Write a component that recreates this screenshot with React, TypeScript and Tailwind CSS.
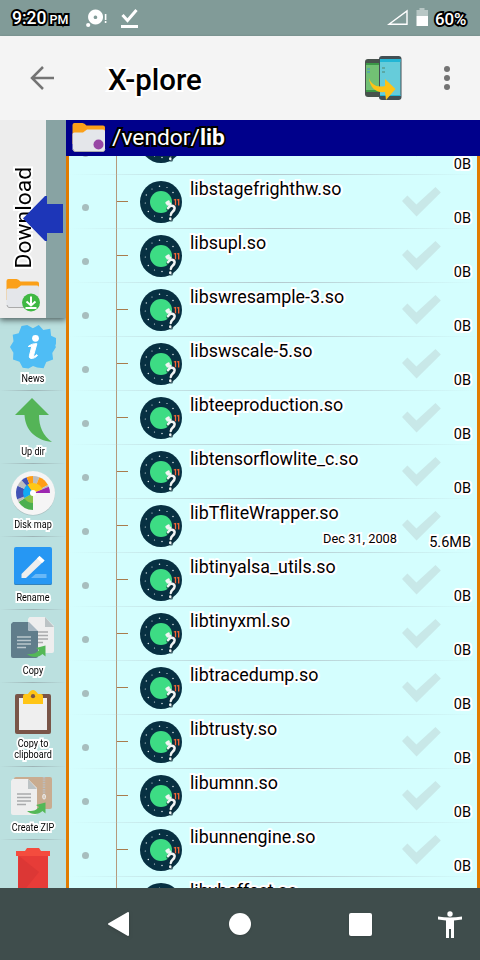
import React from "react";

const LIGHT = "[-webkit-text-stroke:4px_white] [paint-order:stroke_fill] text-black [stroke-linejoin:round]";
const DARK = "[-webkit-text-stroke:4px_black] [paint-order:stroke_fill] text-white [stroke-linejoin:round]";

type FileRow = { name: string; size: string; date?: string; raised?: boolean };

const files: FileRow[] = [
  { name: "", size: "0B", raised: true },
  { name: "libstagefrighthw.so", size: "0B" },
  { name: "libsupl.so", size: "0B" },
  { name: "libswresample-3.so", size: "0B" },
  { name: "libswscale-5.so", size: "0B" },
  { name: "libteeproduction.so", size: "0B" },
  { name: "libtensorflowlite_c.so", size: "0B" },
  { name: "libTfliteWrapper.so", size: "5.6MB", date: "Dec 31, 2008" },
  { name: "libtinyalsa_utils.so", size: "0B" },
  { name: "libtinyxml.so", size: "0B" },
  { name: "libtracedump.so", size: "0B" },
  { name: "libtrusty.so", size: "0B" },
  { name: "libumnn.so", size: "0B" },
  { name: "libunnengine.so", size: "0B" },
  { name: "libvbeffect.so", size: "0B" },
];

function FileIcon() {
  return (
    <svg className="h-[42px] w-[42px] shrink-0" viewBox="0 0 42 42">
      <circle cx="21" cy="21" r="21" fill="#073042" />
      <g fill="#dfe9ec">
        <circle cx="19.5" cy="5.3" r=".75" /><circle cx="27" cy="6.5" r=".6" />
        <circle cx="12" cy="8" r=".6" /><circle cx="33" cy="11.5" r=".75" />
        <circle cx="6.3" cy="14" r=".65" /><circle cx="5.3" cy="22" r=".6" />
        <circle cx="8.3" cy="30.5" r=".75" /><circle cx="14.5" cy="35" r=".6" />
        <circle cx="22" cy="36.5" r=".75" />
      </g>
      <circle cx="21" cy="21" r="11" fill="#3ddc84" />
      <path d="M33.8 19l1.7-.5v6M37 19l1.7-.5v6" fill="none" stroke="#f86734" strokeWidth="1.3" />
      <g fill="none" strokeLinecap="round" strokeLinejoin="round">
        <path d="M28.500 28q1.500-3 4-2.500c3.500 1 2.500 3.800.5 5.500q-1.500 1.500-1.700 3.200M31 38.300v.3" stroke="#0a2733" strokeOpacity=".65" strokeWidth="4.500" />
        <path d="M26.600 21.800l2-1.200M27.500 23.200l2.800-.5M28 27.200q1.600-3 4.200-2.400c3.600 1 2.600 4 .6 5.700q-1.800 1.500-2 3.500M30.300 37.600v.3" stroke="#f1f4f4" strokeWidth="2.500" />
      </g>
    </svg>
  );
}

function Row({ file }: { file: FileRow }) {
  return (
    <div className="flex h-[54px] w-[408px] shrink-0 flex-col">
      <div className="flex h-[53px]">
        <div className="flex w-[47px] shrink-0 justify-center pt-[29px] pr-[14px]">
          <span className="h-[7px] w-[7px] rounded-full bg-[#a7bebe]" />
        </div>
        <div className="-mb-px flex w-6 shrink-0 items-start border-l border-[#b59a7d] pt-[26px]">
          <span className="h-px w-[11px] bg-[#a97b4c]" />
        </div>
        <div className={file.raised ? "" : "pt-[6px]"}><FileIcon /></div>
        <div className="flex min-w-0 grow flex-col pl-2">
          <span className={`mt-1 h-5 whitespace-nowrap text-[17.85px] leading-5 ${LIGHT}`}>{file.name}</span>
          {file.date && <span className={`mt-[8px] self-end pr-[5px] text-[12.8px] leading-4 ${LIGHT}`}>{file.date}</span>}
        </div>
        <div className="flex w-[75px] shrink-0 flex-col">
          <svg className={`h-[30px] w-10 shrink-0 ${file.raised ? "mt-[6px] mb-[6px]" : "mt-3"}`} viewBox="0 0 40 30">
            <path d="M0 14l5.4-5.4 9 9L33.5 0l5.3 5.5L14.5 29.5z" fill="#c8e8e8" />
          </svg>
          <span className={`-mt-[7px] self-end pr-[6px] text-[14.5px] leading-[18px] ${LIGHT}`}>{file.size}</span>
        </div>
      </div>
      <div className="h-px bg-linear-to-r from-transparent via-[#b3c8cd] to-transparent" />
    </div>
  );
}

const NewsIcon = () => (
  <svg className="h-[46px] w-[46px]" viewBox="0 0 46 46">
    <path d="M17.2 1l5.7 3.2L28.8 1l4.5 5 7-1.2.8 7 6.2 2.8-2 7.4L46 23l-3.7 6 .8 6.5-6.8 2.5-2.7 6.2-6.5-.6L23 42l-4.500 2.500-5.800-.8-3.200-6L3 35.500l.4-6.800L0 23l3.500-5.800-.8-6.500 6-1.500L11.500 2z" fill="#4fbdf5" />
    <circle cx="25.5" cy="14.3" r="3.4" fill="#fff" />
    <path d="M18.2 22.5c3-2.3 5.5-3 8.7-2.8l-3.5 12.4c.8.6 2.2-.4 3.4-1.5l.7 1c-3 3.2-9 4.4-8.1.2l2.4-9.5z" fill="#fff" stroke="#fff" strokeWidth="1" />
  </svg>
);
const UpIcon = () => (
  <svg className="h-[46px] w-[46px]" viewBox="0 0 46 46">
    <path d="M22 1l17 17H29c0 12 4 20.500 13 27C26 43 15.500 34 14.500 18H5z" fill="#54b457" />
  </svg>
);

const outerRing: [number, number, string][] = [
  [0, 22, "#bdbdbd"], [22, 62, "#ff9d16"], [62, 68, "#bdbdbd"], [68, 90, "#9c27b0"],
  [180, 238, "#4caf50"], [238, 248, "#bdbdbd"], [248, 295, "#4252b5"],
  [295, 318, "#bdbdbd"], [318, 338, "#4252b5"], [338, 360, "#ff9d16"],
];
const innerRing: [number, number, string][] = [
  [-35, 68, "#ffc817"], [76, 90, "#9c27b0"], [180, 240, "#8bc34a"], [240, 325, "#13a9f4"],
];
function wedge(r: number, from: number, to: number) {
  const at = (deg: number) => {
    const a = (deg * Math.PI) / 180;
    return `${(23 + r * Math.sin(a)).toFixed(2)} ${(23 - r * Math.cos(a)).toFixed(2)}`;
  };
  return `M23 23L${at(from)}A${r} ${r} 0 0 1 ${at(to)}z`;
}
const DiskIcon = () => (
  <svg className="h-[46px] w-[46px]" viewBox="0 0 46 46">
    <circle cx="23" cy="23.600" r="22" fill="#a9bfc0" />
    <circle cx="23" cy="23" r="22" fill="#f5f5f5" />
    {outerRing.map(([a, b, c]) => <path key={a} d={wedge(17, a, b)} fill={c} />)}
    {innerRing.map(([a, b, c]) => <path key={a} d={wedge(10, a, b)} fill={c} />)}
    <circle cx="23" cy="23" r="3" fill="#fff" />
  </svg>
);
const RenameIcon = () => (
  <svg className="h-[46px] w-[46px]" viewBox="0 0 46 46">
    <rect x="4" y="4" width="38" height="38" rx="2" fill="#2697f3" />
    <path d="M4 40q0 2 2 2h34q2 0 2-2v-1q0 2-2 2H6q-2 0-2-2z" fill="#3482b9" />
    <path d="M25.500 31h11v4H21z" fill="#69b8f7" />
    <path d="M11.500 31L29.500 13l5 4.500L16 35h-4.500z" fill="#eee" />
    <path d="M27 15.500l2.500-2.500 5 4.500-2.500 2.500z" fill="#fff" />
  </svg>
);
function Page({ x, y }: { x: number; y: number }) {
  return (
    <g transform={`translate(${x} ${y})`}>
      <path d="M1.500 0H17l9 9v25q0 2-2 2H2q-2 0-2-2V2z" fill="#eee" />
      <path d="M17 0l9 10h-9z" fill="#bcc3c5" />
      <path d="M6 15h14M6 18.500h14M6 22h14M6 25.500h9" stroke="#a9aaac" strokeWidth="1.300" />
    </g>
  );
}
const CopyIcon = () => (
  <svg className="h-[46px] w-[46px]" viewBox="0 0 46 46">
    <Page x={18} y={1} />
    <path d="M3 6h15v7q0 2 2 2h8v25q0 2-2 2H3q-2 0-2-2V8z" fill="#607d8b" />
    <path d="M18 6v7q0 2 2 2h8L19 6z" fill="#a9b9c3" />
    <path d="M7 21h14M7 24.500h14M7 28h14M7 31.500h9" stroke="#b9c7cd" strokeWidth="1.300" />
    <path d="M17 38c7 .5 10-1.500 12-4l-3-2 9.500-2.500v11l-3-2.500c-4 4-11 4-15.500 0z" fill="#54b857" />
  </svg>
);
const ClipIcon = () => (
  <svg className="h-[46px] w-[46px]" viewBox="0 0 46 46">
    <rect x="5" y="5" width="36" height="40" rx="2" fill="#795548" />
    <rect x="9" y="9" width="28" height="32" fill="#efefef" />
    <path d="M13 15V7q0-2 2-2h3q5-8 10 0h3q2 0 2 2v8z" fill="#ffc516" />
    <circle cx="23" cy="7.200" r="2.100" fill="#795548" />
  </svg>
);
const ZipIcon = () => (
  <svg className="h-[46px] w-[46px]" viewBox="0 0 46 46">
    <rect x="4" y="4" width="38" height="32" rx="2" fill="#c9ac90" />
    <path d="M34 4v18" stroke="#bdbdbd" strokeWidth="2.500" strokeDasharray="1.400 1" />
    <rect x="32.800" y="21.500" width="2.600" height="4.500" rx="1.300" fill="#d8c6b5" stroke="#eee" strokeWidth="1" />
    <Page x={1} y={6} />
    <path d="M17 38c7 .5 10-1.500 12-4l-3-2 9.500-2.500v11l-3-2.500c-4 4-11 4-15.500 0z" fill="#54b857" />
  </svg>
);
const TrashIcon = () => (
  <svg className="h-[46px] w-[46px]" viewBox="0 0 46 46">
    <path d="M8 8h30v38H8z" fill="#e73c38" />
    <path d="M9 10l20 16-16 20H8z" fill="#d63434" fillOpacity=".6" />
    <path d="M15 5l2-3h12l2 3h9v5H6V5z" fill="#f44c3e" />
  </svg>
);

function Tool({ label, icon, tall = false }: { label: string; icon: React.ReactNode; tall?: boolean }) {
  return (
    <div className={`flex w-full shrink-0 flex-col items-center ${tall ? "h-[84px]" : "h-[73px]"}`}>
      <div className="mt-[6px] h-[46px]">{icon}</div>
      <div className="mt-[3px] w-[70px] grow scale-x-[0.88] text-center text-[10.300px] leading-[11px] whitespace-pre-line text-black [-webkit-text-stroke:4px_white] [paint-order:stroke_fill]">{label}</div>
      <div className="h-px w-full bg-linear-to-r from-transparent via-[#9db3b5] to-transparent" />
    </div>
  );
}

function Folder({ badge }: { badge: React.ReactNode }) {
  return (
    <svg className="h-9 w-9 shrink-0 overflow-visible" viewBox="0 0 36 36">
      <path d="M1.500 24V5q0-2 2-2h8q2 0 4 2.500h16.500q2 0 2 2v16z" fill="#fba019" />
      <path d="M1.500 28V14q0-1.500 2-1.500h8.500l4-3h16q2 0 2 2v18q0 2-2 2h-28q-2.500 0-2.500-3z" fill="#e4e6ea" />
      <path d="M2 29q.5 2.500 2 2.500h28q1.500 0 2-2" fill="none" stroke="#aaa" />
      {badge}
    </svg>
  );
}

export default function App() {
  return (
    <div className="flex h-[960px] w-[480px] flex-col overflow-hidden font-['Roboto',sans-serif]">
      <div className="flex h-9 shrink-0 items-center bg-[#819b98] pl-3">
        <span className={`w-[74px] pt-[2px] text-[17.500px] leading-6 font-medium ${DARK}`}>9:20<span className="ml-[3px] text-[12.500px]">PM</span></span>
        <svg className="h-6 w-6" viewBox="0 0 24 24" fill="#fff">
          <path fillRule="evenodd" d="M9.500 3.500a7.500 7.500 0 1 0 .1 0zM9.500 9.500a1.800 1.800 0 1 1-.1 0z" />
          <circle cx="2.200" cy="19" r="2.100" />
          <path d="M18.800 8h1.600v6h-1.600zM18.800 15h1.600v2h-1.600z" />
        </svg>
        <svg className="ml-[11px] h-6 w-6" viewBox="0 0 24 24">
          <path d="M1.500 9l5 5.500L15.500 4" fill="none" stroke="#fff" strokeWidth="3" />
          <path d="M0 19h17v3H0z" fill="#fff" />
        </svg>
        <svg className="ml-auto h-9 w-[42px]" viewBox="0 0 42 36">
          <path d="M2 24.300L20 11v13.300z" fill="none" stroke="#fff" strokeWidth="1.400" />
          <path d="M29.500 10h3V8h5v2h3.500v6H29.500z" fill="#b8c7c5" />
          <path d="M29.500 16H41v10H29.500z" fill="#fff" />
        </svg>
        <span className={`ml-[6px] w-[45px] pt-[2px] text-[16.800px] leading-6 font-medium ${DARK}`}>60%</span>
      </div>

      <div className="flex h-[84px] shrink-0 items-center bg-[#f4f4f4] shadow-[0_1px_3px_#0004]">
        <svg className="ml-[30px] h-6 w-6" viewBox="0 0 24 24" fill="none" stroke="#747474" strokeWidth="2.500">
          <path d="M13 1L2 12l11 11M1.800 12H24" />
        </svg>
        <span className={`ml-[54px] pt-[3px] text-[29.400px] leading-9 font-medium ${LIGHT}`}>X-plore</span>
        <svg className="ml-auto h-12 w-[37px]" viewBox="0 0 37 48">
          <rect x="0" y="5" width="17" height="38" rx="3" fill="#47524c" />
          <path d="M1 9h16v28H1z" fill="#72c174" />
          <path d="M1 9h13v2H1zM1 36h14v2H1z" fill="#3b9746" />
          <rect x="14" y="2" width="22.500" height="44" rx="3" fill="#424f54" />
          <path d="M15 5h20.500v37H15z" fill="#66ccda" />
          <path d="M15 5h20.500v3H15zM15 41h20.500v1H15z" fill="#22b6d5" />
          <path d="M2 15h3M2 18h3M17 14h3M17 18h3" stroke="#5ba9a5" strokeWidth="2" />
          <path d="M4 24c2 6 7 10 16 8v-7l10.500 10L21 46l-1-8C11 39 5 34 4 24z" fill="#ffc216" />
        </svg>
        <svg className="mr-[21px] ml-[33px] h-[26px] w-6" viewBox="0 0 24 26" fill="#737373">
          <circle cx="12" cy="4" r="3" /><circle cx="12" cy="13" r="3" /><circle cx="12" cy="22" r="3" />
        </svg>
      </div>

      <div className="flex h-[768px] min-h-0 shrink-0">
        <aside className="flex w-[66px] shrink-0 flex-col overflow-hidden bg-[#bbe0df]">
          <div className="relative flex h-[198px] shrink-0 bg-[#88a3a3] shadow-[0_2px_6px_#0009]">
            <div className="flex w-[46px] flex-col items-center bg-[#ededed]">
              <div className="flex h-[156px] items-end pl-[2px]">
                <span className={`mb-2 rotate-180 text-[22.800px] leading-6 [writing-mode:vertical-rl] ${LIGHT}`}>Download</span>
              </div>
              <Folder badge={<><circle cx="26" cy="26.500" r="9" fill="#3fb843" /><path d="M26 20.500v9M21.500 25.500l4.500 4 4.500-4M20.500 32h11" fill="none" stroke="#fff" strokeWidth="2" /></>} />
            </div>
            <svg className="absolute top-[76px] left-[23px] h-[45px] w-10" viewBox="0 0 40 45">
              <path d="M0 22.500L22 0h2v8h16v29H24v8h-2z" fill="#1d36b8" />
            </svg>
          </div>
          <Tool label="News" icon={<NewsIcon />} />
          <Tool label="Up dir" icon={<UpIcon />} />
          <Tool label="Disk map" icon={<DiskIcon />} />
          <Tool label="Rename" icon={<RenameIcon />} />
          <Tool label="Copy" icon={<CopyIcon />} />
          <Tool label={"Copy to\nclipboard"} icon={<ClipIcon />} tall />
          <Tool label="Create ZIP" icon={<ZipIcon />} />
          <Tool label="" icon={<TrashIcon />} />
        </aside>

        <main className="flex w-[414px] flex-col">
          <div className="flex h-9 shrink-0 items-center bg-[#00008b] pl-[5px]">
            <Folder badge={<circle cx="27.500" cy="24.500" r="5" fill="#9747a4" />} />
            <span className={`ml-[5px] text-[22.800px] leading-8 ${DARK}`}>/vendor/<b>lib</b></span>
          </div>
          <div className="flex h-[732px] flex-col overflow-hidden border-x-[3px] border-[#e17b00] bg-[#d4fefe]">
            <div className="-mt-[35px] flex flex-col">
              {files.map((f, i) => <Row key={i} file={f} />)}
            </div>
          </div>
        </main>
      </div>

      <nav className="flex h-[72px] shrink-0 items-center bg-[#3f4d4c]">
        <svg className="ml-[108px] h-6 w-6 drop-shadow" viewBox="0 0 24 24"><path d="M1 12L20 1v22z" fill="#fff" stroke="#fff" strokeWidth="2" strokeLinejoin="round" /></svg>
        <span className="ml-[97px] h-[22px] w-[22px] rounded-full bg-white shadow" />
        <span className="ml-[98px] h-[23px] w-[23px] rounded-[2px] bg-white shadow" />
        <svg className="ml-[66px] h-[27px] w-6" viewBox="0 0 24 27" fill="#fff">
          <circle cx="12" cy="3" r="2.700" />
          <path d="M0 5.500q12 2 24 0v3l-8 1V27h-3v-9h-2v9H8V9.500l-8-1z" />
        </svg>
      </nav>
    </div>
  );
}
